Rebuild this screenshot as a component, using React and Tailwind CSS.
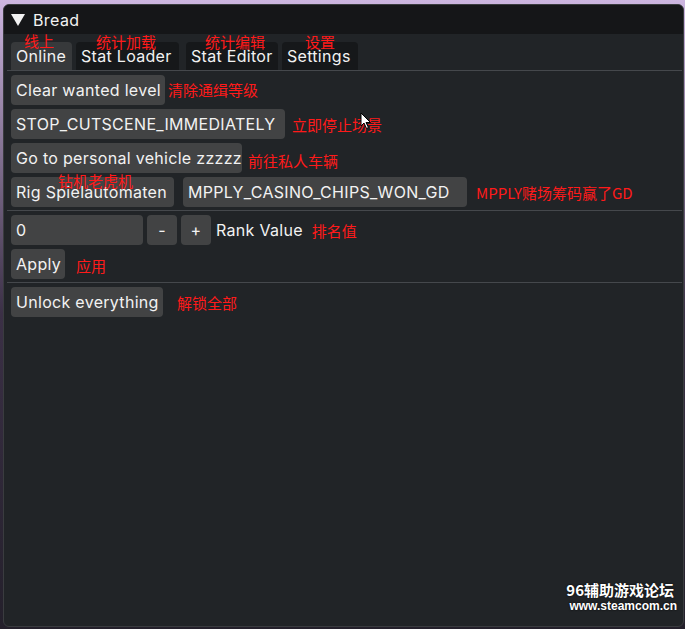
import React from "react";

const btn =
  "h-[30px] px-[5px] rounded-[4px] bg-[#424344] text-[#f2f2f2] text-[16px] tracking-[0.3px] leading-none flex items-center whitespace-nowrap shrink-0";
const red =
  "text-[#ff1a1a] text-[15px] leading-none whitespace-nowrap [font-family:'Noto_Sans_CJK_SC','Noto_Sans',sans-serif]";

const Label = ({ children, className = "" }) => (
  <span className={`${red} ${className}`}>{children}</span>
);

const Separator = () => <div className="h-px bg-[#45484c] -ml-[4px] mr-[1px] -mt-[1px]" />;

const Tab = ({ children, active, className = "" }) => (
  <div
    className={`h-[28px] px-[5px] rounded-t-[4px] flex items-center text-[16px] tracking-[0.3px] text-[#f2f2f2] whitespace-nowrap ${
      active ? "bg-[#37393b]" : "bg-[#16181a]"
    } ${className}`}
  >
    {children}
  </div>
);

export default function App() {
  return (
    <div className="w-[685px] h-[629px] overflow-hidden bg-gradient-to-b from-[#cdb6e0] via-[#3b3046] to-[#24202b] pt-[4px] pl-[3px] [font-family:Inter,'Noto_Sans',sans-serif]">
      <div className="relative w-[681px] h-[623px] rounded-[6px] border border-[#3a3c3f] bg-[#212427] overflow-hidden">
        {/* title bar */}
        <div className="h-[29px] bg-[#151618] flex items-center pl-[7px] gap-[8px] text-[#f2f2f2] text-[16px] tracking-[0.4px]">
          <svg width="14" height="12" viewBox="0 0 14 12">
            <polygon points="0,0 14,0 7,12" fill="#f2f2f2" />
          </svg>
          <span>Bread</span>
        </div>

        <div className="pl-[7px] pt-[8px]">
          {/* tabs */}
          <div className="flex">
            <Tab active className="w-[61px]">Online</Tab>
            <Tab className="w-[103px] ml-[4px]">Stat Loader</Tab>
            <Tab className="w-[92px] ml-[7px]">Stat Editor</Tab>
            <Tab className="w-[76px] ml-[4px]">Settings</Tab>
          </div>
          <div className="h-px bg-[#45484c] -ml-[4px] mr-[1px]" />

          <div className="flex flex-col gap-[4px] pt-[4px]">
            <div className="flex items-center gap-[3px]">
              <div className={`${btn} w-[154px]`}>Clear wanted level</div>
              <Label className="-mt-[2px]">清除通缉等级</Label>
            </div>
            <div className="flex items-center gap-[7px]">
              <div className={`${btn} w-[274px]`}>STOP_CUTSCENE_IMMEDIATELY</div>
              <Label>立即停止场景</Label>
            </div>
            <div className="flex items-center gap-[6px]">
              <div className={`${btn} w-[231px]`}>Go to personal vehicle zzzzz</div>
              <Label className="mt-[5px]">前往私人车辆</Label>
            </div>
            <div className="flex items-center">
              <div className={`${btn} w-[163px]`}>Rig Spielautomaten</div>
              <div className={`${btn} w-[284px] ml-[9px]`}>MPPLY_CASINO_CHIPS_WON_GD</div>
              <Label className="ml-[9px]">MPPLY赌场筹码赢了GD</Label>
            </div>
            <Separator />
            <div className="flex items-center gap-[4px]">
              <div className={`${btn} w-[132px]`}>0</div>
              <div className={`${btn} w-[30px] justify-center`}>-</div>
              <div className={`${btn} w-[30px] justify-center`}>+</div>
              <span className="text-[16px] tracking-[0.3px] text-[#f2f2f2] ml-[1px]">Rank Value</span>
              <Label className="ml-[5px]">排名值</Label>
            </div>
            <div className="flex items-center gap-[11px]">
              <div className={`${btn} w-[54px]`}>Apply</div>
              <Label className="mt-[3px]">应用</Label>
            </div>
            <Separator />
            <div className="flex items-center gap-[14px]">
              <div className={`${btn} w-[152px]`}>Unlock everything</div>
              <Label>解锁全部</Label>
            </div>
          </div>
        </div>

        {/* annotations over tabs */}
        <Label className="absolute left-[20px] top-[28px]">线上</Label>
        <Label className="absolute left-[92px] top-[29px]">统计加载</Label>
        <Label className="absolute left-[201px] top-[29px]">统计编辑</Label>
        <Label className="absolute left-[301px] top-[29px]">设置</Label>
        <Label className="absolute left-[54px] top-[168px]">钻机老虎机</Label>

        {/* mouse cursor */}
        <svg className="absolute left-[356px] top-[107px]" width="12" height="18" viewBox="0 0 12 18">
          <path d="M1 1 L1 14 L4 11 L6.5 16.5 L8.5 15.5 L6 10.5 L10.5 10.5 Z" fill="#ffffff" stroke="#000" strokeWidth="1" />
        </svg>

        {/* watermark */}
        <div className="absolute right-[6px] bottom-[14px] flex flex-col items-end text-white font-bold leading-none [text-shadow:0_0_2px_#000]">
          <span className="text-[15px] mr-[3px] [font-family:'Noto_Sans_CJK_SC',sans-serif]">96辅助游戏论坛</span>
          <span className="text-[12px] mt-[3px] [font-family:'Liberation_Sans',sans-serif]">www.steamcom.cn</span>
        </div>
      </div>
    </div>
  );
}
